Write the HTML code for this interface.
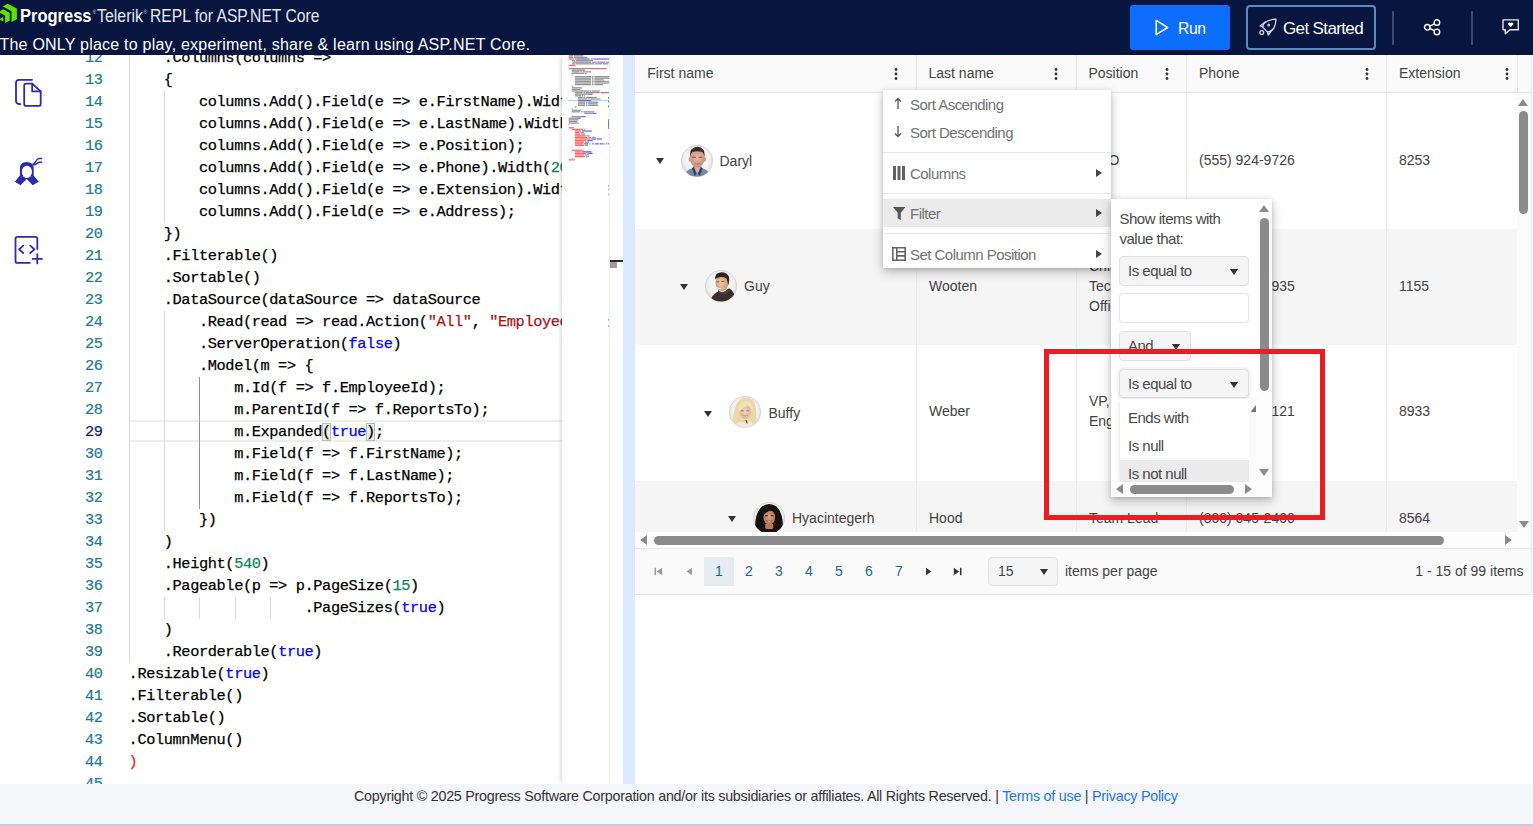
<!DOCTYPE html>
<html lang="en">
<head>
<meta charset="utf-8">
<title>Telerik REPL for ASP.NET Core</title>
<style>
*{box-sizing:border-box;margin:0;padding:0}
html,body{width:1533px;height:826px;overflow:hidden;background:#fff;font-family:"Liberation Sans",sans-serif}
.abs{position:absolute}
#hdr{position:absolute;left:0;top:0;width:1533px;height:55px;background:#07153f;color:#fff;z-index:50}
#hdr .bt{position:absolute;top:3.900px;font-size:18.700px;line-height:24px;white-space:nowrap;color:#fff;transform-origin:0 50%}
#hdr .bt.lt{color:#e4e8f2}
#hdr .bt.rg{font-size:5px;top:-0.500px;color:#cfd5e6}
#hdr .tag{position:absolute;left:-0.5px;top:34.6px;font-size:16px;line-height:20px;white-space:nowrap;letter-spacing:0.225px;color:#fff}
.btn{position:absolute;top:5px;height:45px;border-radius:3px;font-size:17px;color:#fff;line-height:45px;white-space:nowrap}
#run{left:1130px;width:100px;background:#0d6efd}
#gs{left:1246px;width:130px;border:2px solid #5a8abf;border-radius:4px}
.vsep{position:absolute;top:10.500px;width:1.500px;height:34.500px;background:#3b486f}
/* sidebar + editor */
#side{position:absolute;left:0;top:55px;width:60px;height:729px;background:#fff}
#ed{position:absolute;left:60px;top:55px;width:549px;height:729px;background:#fff;overflow:hidden}
#edin{position:absolute;left:-60px;top:-55px;width:623px;height:900px}
.ln{position:absolute;left:60px;width:42.6px;text-align:right;font:15.3px/22px "Liberation Mono",monospace;letter-spacing:-0.384px;color:#237893;height:22px;-webkit-text-stroke:0.2px;margin-top:-0.100px}
.ln.cur{color:#0b216f}
.cl{position:absolute;left:128.6px;height:22px;font:15.3px/22px "Liberation Mono",monospace;letter-spacing:-0.384px;color:#000;white-space:pre;-webkit-text-stroke:0.25px;margin-top:-0.100px}
.k{color:#0000ff}.s{color:#a31515}.n{color:#098658}.err{color:#e8252b}
.br{outline:1px solid #b9b9b9;background:#e9f0e4;outline-offset:-1px}
.ig{position:absolute;width:1px;background:#dadada}
.ig.act{background:#939393}
#curline{position:absolute;left:130px;top:420px;width:432px;height:22px;border-top:2px solid #eee;border-bottom:2px solid #eee}
#mm{position:absolute;left:562px;top:55px;width:48px;height:729px;background:#fff;box-shadow:-3px 0 4px -2px rgba(0,0,0,.18)}
#ovr{position:absolute;left:609px;top:55px;width:13px;height:729px;background:#fff;border-left:1px solid #eee}
#split{position:absolute;left:623px;top:55px;width:12px;height:729px;background:#dbe9fb}
/* grid */
#grid{position:absolute;left:635px;top:55px;width:898px;height:540px;font-size:14px;color:#424242;overflow:hidden}
#gh{position:absolute;left:0;top:0;width:898px;height:38px;background:#fafafa;border-bottom:1px solid #e6e6e6}
.th{position:absolute;top:0;height:37px;line-height:37.6px;padding-left:11.5px;border-left:1px solid #e6e6e6;white-space:nowrap}
.dots{position:absolute;top:12.5px;width:4px;height:12px}
.row{position:absolute;left:0;width:882px}
.row.alt{background:#f5f5f5}
.cell{position:absolute;top:0;height:100%;border-left:1px solid #ebebeb}
.ct{position:absolute;left:12px;white-space:nowrap;line-height:20px}
.nm{position:absolute;line-height:20px;white-space:nowrap}
.av{position:absolute;width:32px;height:32px}
.exp{position:absolute;width:0;height:0;border-left:4.5px solid transparent;border-right:4.5px solid transparent;border-top:6px solid #333}
#pager{position:absolute;left:0;top:493px;width:898px;height:47px;background:#fafafa;border-top:1px solid #e6e6e6;border-bottom:1px solid #e6e6e6}
.pn{position:absolute;top:7.500px;margin-left:1px;width:30px;height:29px;line-height:29px;text-align:center;color:#1d6590;font-size:14px}
/* popups */
.pop{position:absolute;background:#fff;box-shadow:0 4px 10px rgba(0,0,0,.25),0 1px 4px rgba(0,0,0,.13)}
.mi{position:absolute;left:0;width:228px;height:28px;line-height:29.4px;font-size:15px;color:#727272;white-space:nowrap;letter-spacing:-0.53px}
.mi span{position:absolute;left:27px}
.msep{position:absolute;left:0;width:228px;height:1px;background:#e9e9e9}
.arr{position:absolute;width:0;height:0;border-top:4px solid transparent;border-bottom:4px solid transparent;border-left:6px solid #444}
.dd{position:absolute;background:#f5f5f5;border:1px solid #e2e2e2;border-radius:4px;font-size:15px;color:#484848;letter-spacing:-0.5px;white-space:nowrap;overflow:hidden}
.dd span{position:absolute;left:8px}
.dn{position:absolute;width:0;height:0;border-left:4.5px solid transparent;border-right:4.5px solid transparent;border-top:6px solid #333}
#foot{position:absolute;left:0;top:784px;width:1533px;height:42px;background:#f5f6f9;border-bottom:2px solid #c3cdda;font-size:14.3px;color:#333;z-index:40}
#foot div{position:absolute;left:354px;top:3.200px;line-height:18px;white-space:nowrap;letter-spacing:-0.245px}
#foot a{color:#2376ee;text-decoration:none}
#red{position:absolute;left:1044px;top:349px;width:281px;height:171px;border:5px solid #ec1c24;z-index:30}
</style>
</head>
<body>
<svg width="0" height="0" style="position:absolute"><defs>
<radialGradient id="abg" cx="50%" cy="45%" r="55%"><stop offset="0" stop-color="#ffffff"/><stop offset="0.7" stop-color="#f3f3f3"/><stop offset="1" stop-color="#dcdcdc"/></radialGradient>
<clipPath id="acl"><circle cx="16" cy="16" r="15.6"/></clipPath>
<radialGradient id="sk1" cx="50%" cy="45%" r="60%"><stop offset="0" stop-color="#e6b8a2"/><stop offset="1" stop-color="#c48f79"/></radialGradient>
<radialGradient id="sk2" cx="45%" cy="50%" r="60%"><stop offset="0" stop-color="#f0c9a4"/><stop offset="1" stop-color="#c99570"/></radialGradient>
<radialGradient id="sk3" cx="50%" cy="50%" r="60%"><stop offset="0" stop-color="#f3d2bb"/><stop offset="1" stop-color="#ddb094"/></radialGradient>
<radialGradient id="sk4" cx="50%" cy="50%" r="60%"><stop offset="0" stop-color="#d9a27e"/><stop offset="1" stop-color="#a8704f"/></radialGradient>
</defs></svg>
<!-- HEADER -->
<div id="hdr">
  <svg class="abs" style="left:0;top:0" width="20" height="26" viewBox="0 0 20 26">
    <g fill="#5ce500">
      <path d="M7.600 3.700 L16.900 8.600 V19.200 L11.500 22.100 V11.300 L2.900 6.500 Z"/>
      <path d="M3.300 9.200 L9.800 12.900 V20.400 L5.100 23.100 V15.700 L-1.500 12 Z"/>
      <path d="M3.300 16.800 V21.700 L-1 19.200 Z"/>
    </g>
  </svg>
  <div class="bt" style="left:20px;font-weight:bold;font-size:19px;transform:scaleX(0.868)">Progress</div>
  <div class="bt rg" style="left:92.600px">®</div>
  <div class="bt lt" style="left:96.600px;transform:scaleX(0.850)">Telerik</div>
  <div class="bt rg" style="left:143.600px">®</div>
  <div class="bt lt" style="left:150px;transform:scaleX(0.838)">REPL for ASP.NET Core</div>
  <div class="tag">The ONLY place to play, experiment, share &amp; learn using ASP.NET Core.</div>

  <div class="btn" id="run">
    <svg class="abs" style="left:25px;top:14px" width="14" height="17" viewBox="0 0 14 17"><path d="M1.2 1.4 L12.6 8.5 L1.2 15.6 Z" fill="none" stroke="#fff" stroke-width="1.5" stroke-linejoin="round"/></svg>
    <span class="abs" style="left:47.700px;top:0.700px;letter-spacing:-0.400px;transform:scaleX(0.920);transform-origin:0 50%">Run</span>
  </div>
  <div class="btn" id="gs">
    <svg class="abs" style="left:9px;top:10px" width="21" height="20" viewBox="0 0 21 20" fill="none" stroke="#d8dce6" stroke-width="1.250" stroke-linecap="round" stroke-linejoin="round">
      <path d="M19 2.200 C15 2.400 10 3.800 7.200 6.200 C5.700 8 5.800 10 6.300 10.900 L10.400 14.900 C12.500 15 15 13.500 16.800 11.400 C18.300 8.500 18.900 5 19 2.200 Z"/>
      <circle cx="11.700" cy="7.900" r="1.500" fill="#b9bfce" stroke="none"/>
      <path d="M8.600 4.800 L2.900 9 L6.200 9.800"/>
      <path d="M15.700 12.200 L11.300 18 L10.400 14.900"/>
      <circle cx="4.800" cy="15.500" r="1.900"/>
    </svg>
    <span class="abs" style="left:35px;top:-1.300px;letter-spacing:-0.630px">Get Started</span>
  </div>
  <div class="vsep" style="left:1392.200px"></div>
  <div class="vsep" style="left:1471.200px"></div>
  <svg class="abs" style="left:1423px;top:18px" width="19" height="18" viewBox="0 0 19 18" fill="none" stroke="#fff" stroke-width="1.4">
    <circle cx="4.300" cy="9.300" r="2.800"/><circle cx="13.900" cy="4.600" r="2.800"/><circle cx="13.900" cy="13.900" r="2.800"/>
    <path d="M6.800 8.100 L11.400 5.800 M6.800 10.500 L11.400 12.700"/>
  </svg>
  <svg class="abs" style="left:1501px;top:19px" width="19" height="17" viewBox="0 0 19 17">
    <path d="M2 0.900 H17.300 V10.800 H9 L4.300 14.800 V10.800 H2 Z" fill="none" stroke="#e6e9f0" stroke-width="1.400" stroke-linejoin="round"/>
    <path d="M9.700 8.200 L7.200 5.600 A1.400 1.400 0 0 1 9.700 4.200 A1.400 1.400 0 0 1 12.200 5.600 Z" fill="#fff"/>
  </svg>
</div>

<!-- SIDEBAR -->
<div id="side">
  <svg class="abs" style="left:14px;top:23px" width="30" height="31" viewBox="0 0 30 31" fill="none" stroke="#2b2bab" stroke-width="1.800" stroke-linejoin="round" stroke-linecap="round">
    <path d="M18 1.800 H5 Q2 1.800 2 4.800 V22.800 Q2 26.200 6.300 26.200"/>
    <path d="M12.200 5.600 H18.200 L26.700 13.400 V25.900 Q26.700 27.900 24.700 27.900 H12.200 Q10.200 27.900 10.200 25.900 V7.600 Q10.200 5.600 12.200 5.600 Z"/>
    <path d="M18.200 5.600 V13.400 H26.700"/>
  </svg>
  <svg class="abs" style="left:12px;top:100px" width="34" height="34" viewBox="0 0 34 34">
    <path d="M7.900 21.500 V13.500 Q7.900 6.900 14.800 6.900 Q21.700 6.900 21.700 13.500 V21.500 Z" fill="#2b2bab"/>
    <path d="M8 20.500 L2.800 26.700 L8.600 30.300 L14.600 24 L20.700 30.300 L26.700 26.700 L21.600 20.500 L14.600 23 Z" fill="#2b2bab"/>
    <ellipse cx="14.900" cy="16.750" rx="5.100" ry="6.050" fill="#fff"/>
    <path d="M21 9.200 C23.500 8 24.500 3.500 27 3.500 H29.700 M21.500 9.800 C24.500 10 25.500 7.300 27.500 7.300 H29.700" fill="none" stroke="#2b2bab" stroke-width="1.400" stroke-linecap="round"/>
  </svg>
  <svg class="abs" style="left:12px;top:178px" width="34" height="34" viewBox="0 0 34 34" fill="none" stroke="#2b2bab" stroke-width="1.800" stroke-linecap="round" stroke-linejoin="round">
    <path d="M25.300 16.100 V5.800 Q25.300 3.800 23.300 3.800 H5.500 Q3.500 3.800 3.500 5.800 V27.900 Q3.500 29.900 5.500 29.900 H17.800"/>
    <path d="M11.200 12.700 L7.100 16.400 L11.200 20 M18.300 12.700 L22.400 16.400 L18.300 20"/>
    <path d="M25.300 21.200 V30.400 M20.700 25.900 H29.900"/>
  </svg>
</div>

<!-- EDITOR -->
<div id="ed"><div id="edin">
<div id="curline"></div>
<div class="ln" style="top:47px">12</div>
<div class="cl" style="top:47px">    .Columns(columns =&gt;</div>
<div class="ln" style="top:69px">13</div>
<div class="cl" style="top:69px">    {</div>
<div class="ln" style="top:91px">14</div>
<div class="cl" style="top:91px">        columns.Add().Field(e =&gt; e.FirstName).Width(200);</div>
<div class="ln" style="top:113px">15</div>
<div class="cl" style="top:113px">        columns.Add().Field(e =&gt; e.LastName).Width(160);</div>
<div class="ln" style="top:135px">16</div>
<div class="cl" style="top:135px">        columns.Add().Field(e =&gt; e.Position);</div>
<div class="ln" style="top:157px">17</div>
<div class="cl" style="top:157px">        columns.Add().Field(e =&gt; e.Phone).Width(<span class="n">200</span>);</div>
<div class="ln" style="top:179px">18</div>
<div class="cl" style="top:179px">        columns.Add().Field(e =&gt; e.Extension).Width(140);</div>
<div class="ln" style="top:201px">19</div>
<div class="cl" style="top:201px">        columns.Add().Field(e =&gt; e.Address);</div>
<div class="ln" style="top:223px">20</div>
<div class="cl" style="top:223px">    })</div>
<div class="ln" style="top:245px">21</div>
<div class="cl" style="top:245px">    .Filterable()</div>
<div class="ln" style="top:267px">22</div>
<div class="cl" style="top:267px">    .Sortable()</div>
<div class="ln" style="top:289px">23</div>
<div class="cl" style="top:289px">    .DataSource(dataSource =&gt; dataSource</div>
<div class="ln" style="top:311px">24</div>
<div class="cl" style="top:311px">        .Read(read =&gt; read.Action(<span class="s">&quot;All&quot;</span>, <span class="s">&quot;EmployeeDirectory&quot;</span>))</div>
<div class="ln" style="top:333px">25</div>
<div class="cl" style="top:333px">        .ServerOperation(<span class="k">false</span>)</div>
<div class="ln" style="top:355px">26</div>
<div class="cl" style="top:355px">        .Model(m =&gt; {</div>
<div class="ln" style="top:377px">27</div>
<div class="cl" style="top:377px">            m.Id(f =&gt; f.EmployeeId);</div>
<div class="ln" style="top:399px">28</div>
<div class="cl" style="top:399px">            m.ParentId(f =&gt; f.ReportsTo);</div>
<div class="ln cur" style="top:421px">29</div>
<div class="cl" style="top:421px">            m.Expanded<span class="br">(</span><span class="k">true</span><span class="br">)</span>;</div>
<div class="ln" style="top:443px">30</div>
<div class="cl" style="top:443px">            m.Field(f =&gt; f.FirstName);</div>
<div class="ln" style="top:465px">31</div>
<div class="cl" style="top:465px">            m.Field(f =&gt; f.LastName);</div>
<div class="ln" style="top:487px">32</div>
<div class="cl" style="top:487px">            m.Field(f =&gt; f.ReportsTo);</div>
<div class="ln" style="top:509px">33</div>
<div class="cl" style="top:509px">        })</div>
<div class="ln" style="top:531px">34</div>
<div class="cl" style="top:531px">    )</div>
<div class="ln" style="top:553px">35</div>
<div class="cl" style="top:553px">    .Height(<span class="n">540</span>)</div>
<div class="ln" style="top:575px">36</div>
<div class="cl" style="top:575px">    .Pageable(p =&gt; p.PageSize(<span class="n">15</span>)</div>
<div class="ln" style="top:597px">37</div>
<div class="cl" style="top:597px">                    .PageSizes(<span class="k">true</span>)</div>
<div class="ln" style="top:619px">38</div>
<div class="cl" style="top:619px">    )</div>
<div class="ln" style="top:641px">39</div>
<div class="cl" style="top:641px">    .Reorderable(<span class="k">true</span>)</div>
<div class="ln" style="top:663px">40</div>
<div class="cl" style="top:663px">.Resizable(<span class="k">true</span>)</div>
<div class="ln" style="top:685px">41</div>
<div class="cl" style="top:685px">.Filterable()</div>
<div class="ln" style="top:707px">42</div>
<div class="cl" style="top:707px">.Sortable()</div>
<div class="ln" style="top:729px">43</div>
<div class="cl" style="top:729px">.ColumnMenu()</div>
<div class="ln" style="top:751px">44</div>
<div class="cl" style="top:751px"><span class="err">)</span></div>
<div class="ln" style="top:773px">45</div>
<div class="cl" style="top:773px"></div>
<div class="ig" style="left:129.0px;top:47px;height:616px"></div>
<div class="ig" style="left:164.2px;top:91px;height:132px"></div>
<div class="ig" style="left:164.2px;top:311px;height:220px"></div>
<div class="ig act" style="left:199.4px;top:377px;height:132px"></div>
<div class="ig" style="left:164.2px;top:597px;height:22px"></div>
<div class="ig" style="left:199.4px;top:597px;height:22px"></div>
<div class="ig" style="left:234.6px;top:597px;height:22px"></div>
<div class="ig" style="left:269.8px;top:597px;height:22px"></div>
</div></div>
<div id="mm"><svg class="abs" style="left:0;top:0" width="48" height="290" viewBox="0 0 48 290"><rect x="6" y="45.20" width="41" height="0.9" fill="#9cc7f5" opacity=".9"/><rect x="6.60" y="0.20" width="0.78" height="1.25" fill="#ff0000" opacity="0.60"/><rect x="7.38" y="0.20" width="3.90" height="1.25" fill="#000" opacity="0.42"/><rect x="12.06" y="0.20" width="9.36" height="1.25" fill="#000" opacity="0.42"/><rect x="6.60" y="1.80" width="0.78" height="1.25" fill="#ff0000" opacity="0.60"/><rect x="7.38" y="1.80" width="3.90" height="1.25" fill="#000" opacity="0.42"/><rect x="12.06" y="1.80" width="13.26" height="1.25" fill="#000" opacity="0.42"/><rect x="6.60" y="3.40" width="5.46" height="1.25" fill="#ff0000" opacity="0.60"/><rect x="12.84" y="3.40" width="2.34" height="1.25" fill="#ff0000" opacity="0.60"/><rect x="15.18" y="3.40" width="12.48" height="1.25" fill="#0000ff" opacity="0.60"/><rect x="28.44" y="3.40" width="3.90" height="1.25" fill="#ff0000" opacity="0.60"/><rect x="32.34" y="3.40" width="14.66" height="1.25" fill="#0000ff" opacity="0.60"/><rect x="9.72" y="5.00" width="3.12" height="1.25" fill="#000" opacity="0.42"/><rect x="13.62" y="5.00" width="17.16" height="1.25" fill="#000" opacity="0.42"/><rect x="10.50" y="6.60" width="18.72" height="1.25" fill="#000" opacity="0.42"/><rect x="30.00" y="6.60" width="4.68" height="1.25" fill="#000" opacity="0.42"/><rect x="35.46" y="6.60" width="7.80" height="1.25" fill="#000" opacity="0.42"/><rect x="44.04" y="6.60" width="2.96" height="1.25" fill="#000" opacity="0.42"/><rect x="9.72" y="8.20" width="3.12" height="1.25" fill="#000" opacity="0.42"/><rect x="13.62" y="8.20" width="18.72" height="1.25" fill="#000" opacity="0.42"/><rect x="33.12" y="8.20" width="7.02" height="1.25" fill="#000" opacity="0.42"/><rect x="40.92" y="8.20" width="5.46" height="1.25" fill="#000" opacity="0.42"/><rect x="6.60" y="9.80" width="7.02" height="1.25" fill="#ff0000" opacity="0.60"/><rect x="6.60" y="13.00" width="1.56" height="1.25" fill="#ff0000" opacity="0.60"/><rect x="8.16" y="13.00" width="17.16" height="1.25" fill="#000" opacity="0.42"/><rect x="25.32" y="13.00" width="17.16" height="1.25" fill="#a31515" opacity="0.60"/><rect x="42.48" y="13.00" width="2.34" height="1.25" fill="#000" opacity="0.42"/><rect x="9.72" y="14.60" width="4.68" height="1.25" fill="#000" opacity="0.42"/><rect x="14.40" y="14.60" width="7.80" height="1.25" fill="#a31515" opacity="0.60"/><rect x="22.20" y="14.60" width="0.78" height="1.25" fill="#000" opacity="0.42"/><rect x="9.72" y="16.20" width="7.80" height="1.25" fill="#000" opacity="0.42"/><rect x="18.30" y="16.20" width="1.56" height="1.25" fill="#000" opacity="0.42"/><rect x="20.64" y="16.20" width="8.58" height="1.25" fill="#000" opacity="0.42"/><rect x="9.72" y="17.80" width="12.48" height="1.25" fill="#000" opacity="0.42"/><rect x="22.98" y="17.80" width="1.56" height="1.25" fill="#000" opacity="0.42"/><rect x="9.72" y="19.40" width="0.78" height="1.25" fill="#000" opacity="0.42"/><rect x="12.84" y="21.00" width="16.38" height="1.25" fill="#000" opacity="0.42"/><rect x="30.00" y="21.00" width="1.56" height="1.25" fill="#000" opacity="0.42"/><rect x="32.34" y="21.00" width="14.66" height="1.25" fill="#000" opacity="0.42"/><rect x="12.84" y="22.60" width="16.38" height="1.25" fill="#000" opacity="0.42"/><rect x="30.00" y="22.60" width="1.56" height="1.25" fill="#000" opacity="0.42"/><rect x="32.34" y="22.60" width="14.66" height="1.25" fill="#000" opacity="0.42"/><rect x="12.84" y="24.20" width="16.38" height="1.25" fill="#000" opacity="0.42"/><rect x="30.00" y="24.20" width="1.56" height="1.25" fill="#000" opacity="0.42"/><rect x="32.34" y="24.20" width="9.36" height="1.25" fill="#000" opacity="0.42"/><rect x="12.84" y="25.80" width="16.38" height="1.25" fill="#000" opacity="0.42"/><rect x="30.00" y="25.80" width="1.56" height="1.25" fill="#000" opacity="0.42"/><rect x="32.34" y="25.80" width="11.70" height="1.25" fill="#000" opacity="0.42"/><rect x="44.04" y="25.80" width="2.34" height="1.25" fill="#098658" opacity="0.60"/><rect x="46.38" y="25.80" width="0.62" height="1.25" fill="#000" opacity="0.42"/><rect x="12.84" y="27.40" width="16.38" height="1.25" fill="#000" opacity="0.42"/><rect x="30.00" y="27.40" width="1.56" height="1.25" fill="#000" opacity="0.42"/><rect x="32.34" y="27.40" width="14.66" height="1.25" fill="#000" opacity="0.42"/><rect x="12.84" y="29.00" width="16.38" height="1.25" fill="#000" opacity="0.42"/><rect x="30.00" y="29.00" width="1.56" height="1.25" fill="#000" opacity="0.42"/><rect x="32.34" y="29.00" width="8.58" height="1.25" fill="#000" opacity="0.42"/><rect x="9.72" y="30.60" width="1.56" height="1.25" fill="#000" opacity="0.42"/><rect x="9.72" y="32.20" width="10.14" height="1.25" fill="#000" opacity="0.42"/><rect x="9.72" y="33.80" width="8.58" height="1.25" fill="#000" opacity="0.42"/><rect x="9.72" y="35.40" width="17.16" height="1.25" fill="#000" opacity="0.42"/><rect x="27.66" y="35.40" width="1.56" height="1.25" fill="#000" opacity="0.42"/><rect x="30.00" y="35.40" width="7.80" height="1.25" fill="#000" opacity="0.42"/><rect x="12.84" y="37.00" width="7.80" height="1.25" fill="#000" opacity="0.42"/><rect x="21.42" y="37.00" width="1.56" height="1.25" fill="#000" opacity="0.42"/><rect x="23.76" y="37.00" width="9.36" height="1.25" fill="#000" opacity="0.42"/><rect x="33.12" y="37.00" width="3.90" height="1.25" fill="#a31515" opacity="0.60"/><rect x="37.02" y="37.00" width="0.78" height="1.25" fill="#000" opacity="0.42"/><rect x="38.58" y="37.00" width="8.42" height="1.25" fill="#a31515" opacity="0.60"/><rect x="12.84" y="38.60" width="13.26" height="1.25" fill="#000" opacity="0.42"/><rect x="26.10" y="38.60" width="3.90" height="1.25" fill="#0000ff" opacity="0.60"/><rect x="30.00" y="38.60" width="0.78" height="1.25" fill="#000" opacity="0.42"/><rect x="12.84" y="40.20" width="6.24" height="1.25" fill="#000" opacity="0.42"/><rect x="19.86" y="40.20" width="1.56" height="1.25" fill="#000" opacity="0.42"/><rect x="22.20" y="40.20" width="0.78" height="1.25" fill="#000" opacity="0.42"/><rect x="15.96" y="41.80" width="4.68" height="1.25" fill="#000" opacity="0.42"/><rect x="21.42" y="41.80" width="1.56" height="1.25" fill="#000" opacity="0.42"/><rect x="23.76" y="41.80" width="10.92" height="1.25" fill="#000" opacity="0.42"/><rect x="15.96" y="43.40" width="9.36" height="1.25" fill="#000" opacity="0.42"/><rect x="26.10" y="43.40" width="1.56" height="1.25" fill="#000" opacity="0.42"/><rect x="28.44" y="43.40" width="10.14" height="1.25" fill="#000" opacity="0.42"/><rect x="15.96" y="45.00" width="7.80" height="1.25" fill="#000" opacity="0.42"/><rect x="23.76" y="45.00" width="0.78" height="1.25" fill="#000" opacity="0.42"/><rect x="24.54" y="45.00" width="3.12" height="1.25" fill="#0000ff" opacity="0.60"/><rect x="27.66" y="45.00" width="0.78" height="1.25" fill="#000" opacity="0.42"/><rect x="28.44" y="45.00" width="0.78" height="1.25" fill="#000" opacity="0.42"/><rect x="15.96" y="46.60" width="7.02" height="1.25" fill="#000" opacity="0.42"/><rect x="23.76" y="46.60" width="1.56" height="1.25" fill="#000" opacity="0.42"/><rect x="26.10" y="46.60" width="10.14" height="1.25" fill="#000" opacity="0.42"/><rect x="15.96" y="48.20" width="7.02" height="1.25" fill="#000" opacity="0.42"/><rect x="23.76" y="48.20" width="1.56" height="1.25" fill="#000" opacity="0.42"/><rect x="26.10" y="48.20" width="9.36" height="1.25" fill="#000" opacity="0.42"/><rect x="15.96" y="49.80" width="7.02" height="1.25" fill="#000" opacity="0.42"/><rect x="23.76" y="49.80" width="1.56" height="1.25" fill="#000" opacity="0.42"/><rect x="26.10" y="49.80" width="10.14" height="1.25" fill="#000" opacity="0.42"/><rect x="12.84" y="51.40" width="1.56" height="1.25" fill="#000" opacity="0.42"/><rect x="9.72" y="53.00" width="0.78" height="1.25" fill="#000" opacity="0.42"/><rect x="9.72" y="54.60" width="6.24" height="1.25" fill="#000" opacity="0.42"/><rect x="15.96" y="54.60" width="2.34" height="1.25" fill="#098658" opacity="0.60"/><rect x="18.30" y="54.60" width="0.78" height="1.25" fill="#000" opacity="0.42"/><rect x="9.72" y="56.20" width="8.58" height="1.25" fill="#000" opacity="0.42"/><rect x="19.08" y="56.20" width="1.56" height="1.25" fill="#000" opacity="0.42"/><rect x="21.42" y="56.20" width="8.58" height="1.25" fill="#000" opacity="0.42"/><rect x="30.00" y="56.20" width="1.56" height="1.25" fill="#098658" opacity="0.60"/><rect x="31.56" y="56.20" width="0.78" height="1.25" fill="#000" opacity="0.42"/><rect x="22.20" y="57.80" width="8.58" height="1.25" fill="#000" opacity="0.42"/><rect x="30.78" y="57.80" width="3.12" height="1.25" fill="#0000ff" opacity="0.60"/><rect x="33.90" y="57.80" width="0.78" height="1.25" fill="#000" opacity="0.42"/><rect x="9.72" y="59.40" width="0.78" height="1.25" fill="#000" opacity="0.42"/><rect x="9.72" y="61.00" width="10.14" height="1.25" fill="#000" opacity="0.42"/><rect x="19.86" y="61.00" width="3.12" height="1.25" fill="#0000ff" opacity="0.60"/><rect x="22.98" y="61.00" width="0.78" height="1.25" fill="#000" opacity="0.42"/><rect x="6.60" y="62.60" width="8.58" height="1.25" fill="#000" opacity="0.42"/><rect x="15.18" y="62.60" width="3.12" height="1.25" fill="#0000ff" opacity="0.60"/><rect x="18.30" y="62.60" width="0.78" height="1.25" fill="#000" opacity="0.42"/><rect x="6.60" y="64.20" width="10.14" height="1.25" fill="#000" opacity="0.42"/><rect x="6.60" y="65.80" width="8.58" height="1.25" fill="#000" opacity="0.42"/><rect x="6.60" y="67.40" width="10.14" height="1.25" fill="#000" opacity="0.42"/><rect x="6.60" y="69.00" width="0.78" height="1.25" fill="#ff0000" opacity="0.60"/><rect x="6.60" y="72.20" width="5.46" height="1.25" fill="#ff0000" opacity="0.60"/><rect x="9.72" y="73.80" width="11.70" height="1.25" fill="#ff0000" opacity="0.60"/><rect x="22.20" y="73.80" width="0.78" height="1.25" fill="#ff0000" opacity="0.60"/><rect x="12.84" y="75.40" width="6.24" height="1.25" fill="#ff0000" opacity="0.60"/><rect x="19.86" y="75.40" width="9.36" height="1.25" fill="#0000ff" opacity="0.60"/><rect x="29.22" y="75.40" width="0.78" height="1.25" fill="#ff0000" opacity="0.60"/><rect x="12.84" y="77.00" width="4.68" height="1.25" fill="#ff0000" opacity="0.60"/><rect x="18.30" y="77.00" width="3.12" height="1.25" fill="#098658" opacity="0.60"/><rect x="21.42" y="77.00" width="0.78" height="1.25" fill="#ff0000" opacity="0.60"/><rect x="12.84" y="78.60" width="5.46" height="1.25" fill="#ff0000" opacity="0.60"/><rect x="19.08" y="78.60" width="3.12" height="1.25" fill="#098658" opacity="0.60"/><rect x="22.20" y="78.60" width="0.78" height="1.25" fill="#ff0000" opacity="0.60"/><rect x="12.84" y="80.20" width="10.92" height="1.25" fill="#ff0000" opacity="0.60"/><rect x="24.54" y="80.20" width="2.34" height="1.25" fill="#098658" opacity="0.60"/><rect x="26.88" y="80.20" width="0.78" height="1.25" fill="#ff0000" opacity="0.60"/><rect x="12.84" y="81.80" width="12.48" height="1.25" fill="#ff0000" opacity="0.60"/><rect x="26.10" y="81.80" width="3.12" height="1.25" fill="#098658" opacity="0.60"/><rect x="30.00" y="81.80" width="3.12" height="1.25" fill="#098658" opacity="0.60"/><rect x="33.12" y="81.80" width="0.78" height="1.25" fill="#ff0000" opacity="0.60"/><rect x="12.84" y="83.40" width="15.60" height="1.25" fill="#ff0000" opacity="0.60"/><rect x="29.22" y="83.40" width="4.68" height="1.25" fill="#0000ff" opacity="0.60"/><rect x="34.68" y="83.40" width="4.68" height="1.25" fill="#0000ff" opacity="0.60"/><rect x="39.36" y="83.40" width="0.78" height="1.25" fill="#ff0000" opacity="0.60"/><rect x="12.84" y="85.00" width="11.70" height="1.25" fill="#ff0000" opacity="0.60"/><rect x="25.32" y="85.00" width="4.68" height="1.25" fill="#0000ff" opacity="0.60"/><rect x="30.00" y="85.00" width="0.78" height="1.25" fill="#ff0000" opacity="0.60"/><rect x="12.84" y="86.60" width="9.36" height="1.25" fill="#ff0000" opacity="0.60"/><rect x="22.98" y="86.60" width="3.12" height="1.25" fill="#098658" opacity="0.60"/><rect x="26.10" y="86.60" width="0.78" height="1.25" fill="#ff0000" opacity="0.60"/><rect x="12.84" y="88.20" width="8.58" height="1.25" fill="#ff0000" opacity="0.60"/><rect x="22.20" y="88.20" width="3.90" height="1.25" fill="#0000ff" opacity="0.60"/><rect x="26.88" y="88.20" width="0.78" height="1.25" fill="#098658" opacity="0.60"/><rect x="28.44" y="88.20" width="0.78" height="1.25" fill="#098658" opacity="0.60"/><rect x="30.00" y="88.20" width="2.34" height="1.25" fill="#098658" opacity="0.60"/><rect x="33.12" y="88.20" width="3.90" height="1.25" fill="#0000ff" opacity="0.60"/><rect x="37.80" y="88.20" width="3.90" height="1.25" fill="#0000ff" opacity="0.60"/><rect x="42.48" y="88.20" width="0.78" height="1.25" fill="#0000ff" opacity="0.60"/><rect x="44.04" y="88.20" width="0.78" height="1.25" fill="#0000ff" opacity="0.60"/><rect x="45.60" y="88.20" width="1.40" height="1.25" fill="#0000ff" opacity="0.60"/><rect x="12.84" y="89.80" width="9.36" height="1.25" fill="#ff0000" opacity="0.60"/><rect x="22.98" y="89.80" width="2.34" height="1.25" fill="#098658" opacity="0.60"/><rect x="25.32" y="89.80" width="0.78" height="1.25" fill="#ff0000" opacity="0.60"/><rect x="9.72" y="91.40" width="0.78" height="1.25" fill="#000" opacity="0.42"/><rect x="9.72" y="94.60" width="10.92" height="1.25" fill="#ff0000" opacity="0.60"/><rect x="21.42" y="94.60" width="0.78" height="1.25" fill="#ff0000" opacity="0.60"/><rect x="12.84" y="96.20" width="6.24" height="1.25" fill="#ff0000" opacity="0.60"/><rect x="19.86" y="96.20" width="9.36" height="1.25" fill="#0000ff" opacity="0.60"/><rect x="29.22" y="96.20" width="0.78" height="1.25" fill="#ff0000" opacity="0.60"/><rect x="12.84" y="97.80" width="11.70" height="1.25" fill="#ff0000" opacity="0.60"/><rect x="25.32" y="97.80" width="4.68" height="1.25" fill="#0000ff" opacity="0.60"/><rect x="30.00" y="97.80" width="0.78" height="1.25" fill="#ff0000" opacity="0.60"/><rect x="12.84" y="99.40" width="9.36" height="1.25" fill="#ff0000" opacity="0.60"/><rect x="22.98" y="99.40" width="3.12" height="1.25" fill="#098658" opacity="0.60"/><rect x="26.10" y="99.40" width="0.78" height="1.25" fill="#ff0000" opacity="0.60"/><rect x="12.84" y="101.00" width="10.14" height="1.25" fill="#ff0000" opacity="0.60"/><rect x="23.76" y="101.00" width="2.34" height="1.25" fill="#098658" opacity="0.60"/><rect x="26.10" y="101.00" width="0.78" height="1.25" fill="#ff0000" opacity="0.60"/><rect x="9.72" y="102.60" width="0.78" height="1.25" fill="#000" opacity="0.42"/><rect x="6.60" y="104.20" width="6.24" height="1.25" fill="#ff0000" opacity="0.60"/><rect x="46" y="42.0" width="2" height="1.7" fill="#2e9c7b"/><rect x="46" y="45.7" width="2" height="1.7" fill="#2e9c7b"/><rect x="46" y="50.5" width="2" height="1.7" fill="#2e9c7b"/><rect x="46.3" y="130" width="1.6" height="1.5" fill="#3fa58a"/><rect x="46.3" y="133.900" width="1.6" height="1.500" fill="#3fa58a"/><rect x="46.300" y="138.600" width="1.600" height="1.500" fill="#3fa58a"/><rect x="46.300" y="264" width="1.600" height="1.600" fill="#c0504d"/><rect x="46.300" y="270.300" width="1.600" height="1.600" fill="#c0504d"/><rect x="46" y="64.2" width="2" height="2" fill="#4a97e6"/><rect x="46" y="66.2" width="2" height="5.7" fill="#a9714f"/><rect x="46" y="71.9" width="2" height="2" fill="#4a97e6"/></svg></div>
<div id="ovr">
  <div class="abs" style="left:0;top:205px;width:13px;height:1.5px;background:#2b2b2b"></div>
  <div class="abs" style="left:0;top:206.5px;width:7px;height:6px;background:#9c9c9c"></div>
</div>
<div id="split"></div>

<div id="grid">
  <div id="gh">
    <div class="th" style="left:0;width:281px;border-left:none;padding-left:12.300px">First name</div>
    <div class="th" style="left:281px;width:160px">Last name</div>
    <div class="th" style="left:441px;width:110px">Position</div>
    <div class="th" style="left:551px;width:200px;padding-left:12px">Phone</div>
    <div class="th" style="left:751px;width:131px;padding-left:12px">Extension</div>
    <div class="th" style="left:882px;width:16px;padding:0"></div>
    <svg class="dots" style="left:258.5px" viewBox="0 0 4 12"><circle cx="2" cy="1.5" r="1.4" fill="#333"/><circle cx="2" cy="6" r="1.4" fill="#333"/><circle cx="2" cy="10.5" r="1.4" fill="#333"/></svg>
    <svg class="dots" style="left:418.5px" viewBox="0 0 4 12"><circle cx="2" cy="1.5" r="1.4" fill="#333"/><circle cx="2" cy="6" r="1.4" fill="#333"/><circle cx="2" cy="10.5" r="1.4" fill="#333"/></svg>
    <svg class="dots" style="left:529.5px" viewBox="0 0 4 12"><circle cx="2" cy="1.5" r="1.4" fill="#333"/><circle cx="2" cy="6" r="1.4" fill="#333"/><circle cx="2" cy="10.5" r="1.4" fill="#333"/></svg>
    <svg class="dots" style="left:729.5px" viewBox="0 0 4 12"><circle cx="2" cy="1.5" r="1.4" fill="#333"/><circle cx="2" cy="6" r="1.4" fill="#333"/><circle cx="2" cy="10.5" r="1.4" fill="#333"/></svg>
    <svg class="dots" style="left:869.5px" viewBox="0 0 4 12"><circle cx="2" cy="1.5" r="1.4" fill="#333"/><circle cx="2" cy="6" r="1.4" fill="#333"/><circle cx="2" cy="10.5" r="1.4" fill="#333"/></svg>
  </div>

  <!-- row 1 -->
  <div class="row" style="top:38px;height:136px">
    <div class="cell" style="left:281px;width:160px"></div>
    <div class="cell" style="left:441px;width:110px"><div class="ct" style="top:56.500px">CEO</div></div>
    <div class="cell" style="left:551px;width:200px"><div class="ct" style="top:56.500px">(555) 924-9726</div></div>
    <div class="cell" style="left:751px;width:131px"><div class="ct" style="top:56.500px">8253</div></div>
    <div class="exp" style="left:20.7px;top:64.7px"></div>
    <svg class="av" style="left:45.5px;top:51.6px" viewBox="0 0 32 32"><circle cx="16" cy="16" r="15.7" fill="url(#abg)" stroke="#d2d2d2" stroke-width="0.8"/><g clip-path="url(#acl)"><path d="M3 32 Q4 25.5 10.5 23.5 L16.3 28 L22 23.5 Q28.500 25.500 29.500 32Z" fill="#7189ab"/><path d="M12.200 22 L16.300 29 L20.600 22 L19.500 19 H13Z" fill="url(#sk1)"/><path d="M10.800 23.300 L13 22 L15.600 28.500 L13.800 31Z M21.800 23.300 L19.700 22 L17 28.500 L18.800 31Z" fill="#35426a"/><ellipse cx="16.300" cy="13.200" rx="7.300" ry="9.300" fill="url(#sk1)"/><ellipse cx="8.800" cy="14.500" rx="1.200" ry="2.200" fill="#cf9a84"/><ellipse cx="23.800" cy="14.500" rx="1.200" ry="2.200" fill="#cf9a84"/><path d="M9 12.500 Q8.200 2 16.300 1.800 Q24.500 2 23.600 12.500 Q23 8 20.500 6.800 Q16.300 5.600 12 6.800 Q9.600 8 9 12.500Z" fill="#3a2c2a"/><path d="M11.300 12.300 h3.600 M17.700 12.300 h3.600" stroke="#5a4038" stroke-width="1.100" opacity=".8"/><path d="M13.300 18.300 Q16.300 20.300 19.300 18.300 Q16.300 19.300 13.300 18.300Z" fill="#b9766e" stroke="#b9766e" stroke-width=".5"/></g></svg>
    <div class="nm" style="left:84.5px;top:57.5px">Daryl</div>
  </div>
  <!-- row 2 -->
  <div class="row alt" style="top:174px;height:116px">
    <div class="cell" style="left:281px;width:160px"><div class="ct" style="top:47px">Wooten</div></div>
    <div class="cell" style="left:441px;width:110px"><div class="ct" style="top:27px">Chief<br>Technical<br>Officer</div></div>
    <div class="cell" style="left:551px;width:200px"><div class="ct" style="top:47px">(555) 763-1935</div></div>
    <div class="cell" style="left:751px;width:131px"><div class="ct" style="top:47px">1155</div></div>
    <div class="exp" style="left:44.7px;top:55px"></div>
    <svg class="av" style="left:69.6px;top:41.2px" viewBox="0 0 32 32"><circle cx="16" cy="16" r="15.7" fill="url(#abg)" stroke="#d2d2d2" stroke-width="0.8"/><g clip-path="url(#acl)"><path d="M5.500 32 Q6 25 13 21.500 L18 22.500 L24.500 18.500 Q27.500 20 29.500 25 L30 32Z" fill="#3b2e2f"/><path d="M13 20 Q17 24.500 22.500 19.500 L24.200 18 Q25.200 20.500 22 23.500 Q17.500 26 13 22Z" fill="#4d3f40"/><ellipse cx="16.800" cy="13" rx="6.300" ry="8.200" fill="url(#sk2)" transform="rotate(-8 16.800 13)"/><path d="M10.300 9.500 Q9.500 3.500 15 2.600 Q19 1.600 22 4 Q25 6.500 24 12 L23.300 15.500 Q22.500 11 21.500 8.500 Q18 6.500 14.500 7.200 Q11.500 7.500 10.300 9.500Z" fill="#30231d"/><path d="M12 17.500 Q14 19.300 16.500 18.300" stroke="#fff" stroke-width="1" fill="none" opacity=".8"/><path d="M11.500 11.800 h2.600 M16.300 11.500 h2.800" stroke="#5a4030" stroke-width="1" opacity=".7"/></g></svg>
    <div class="nm" style="left:109px;top:47px">Guy</div>
  </div>
  <!-- row 3 -->
  <div class="row" style="top:290px;height:136px">
    <div class="cell" style="left:281px;width:160px"><div class="ct" style="top:56px">Weber</div></div>
    <div class="cell" style="left:441px;width:110px"><div class="ct" style="top:46px">VP,<br>Engineering</div></div>
    <div class="cell" style="left:551px;width:200px"><div class="ct" style="top:56px">(555) 579-5121</div></div>
    <div class="cell" style="left:751px;width:131px"><div class="ct" style="top:56px">8933</div></div>
    <div class="exp" style="left:68.7px;top:65.5px"></div>
    <svg class="av" style="left:93.5px;top:51.4px" viewBox="0 0 32 32"><circle cx="16" cy="16" r="15.7" fill="url(#abg)" stroke="#d2d2d2" stroke-width="0.8"/><g clip-path="url(#acl)"><path d="M4 31 Q3.500 14 8 7 Q12 1.200 17.500 1.500 Q23.500 2 26 8 Q28.500 15 26.500 31Z" fill="#ead9a6"/><ellipse cx="16.300" cy="15.500" rx="5.700" ry="7.600" fill="url(#sk3)"/><path d="M9.500 16 Q9 6.500 16 5.200 Q22 4.800 23.500 10.500 Q24 13 23 15.500 Q21.500 10.500 18.500 9.500 Q13.500 11.500 9.500 16Z" fill="#f0e2b6"/><path d="M5 32 Q6 27 11.500 25.500 L16 27 L20.500 25.500 Q25.500 27 27 32Z" fill="#efe9df"/><path d="M12.300 14.700 h2.300 M17.500 14.700 h2.300" stroke="#5b7a9a" stroke-width="1.100" opacity=".9"/><path d="M13.700 19.300 Q16.300 21.200 18.800 19.300 Q16.300 20.200 13.700 19.300Z" fill="#fff" stroke="#d08a86" stroke-width=".6"/><path d="M17 24 l1.200 3.500" stroke="#3a2a25" stroke-width="1"/></g></svg>
    <div class="nm" style="left:133.5px;top:57.5px">Buffy</div>
  </div>
  <!-- row 4 -->
  <div class="row alt" style="top:426px;height:74px">
    <div class="cell" style="left:281px;width:160px"><div class="ct" style="top:26.500px">Hood</div></div>
    <div class="cell" style="left:441px;width:110px"><div class="ct" style="top:26.500px">Team Lead</div></div>
    <div class="cell" style="left:551px;width:200px"><div class="ct" style="top:26.500px">(800) 045-2400</div></div>
    <div class="cell" style="left:751px;width:131px"><div class="ct" style="top:26.500px">8564</div></div>
    <div class="exp" style="left:92.7px;top:35px"></div>
    <svg class="av" style="left:117.5px;top:21.3px" viewBox="0 0 32 32"><circle cx="16" cy="16" r="15.7" fill="url(#abg)" stroke="#d2d2d2" stroke-width="0.8"/><g clip-path="url(#acl)"><path d="M2.500 32 Q0.500 12 9 4.500 Q16 -0.500 23.500 4.500 Q31.500 12 29.500 32Z" fill="#17100f"/><path d="M12.500 22 L12 26.500 Q16.300 28.500 20.500 26.500 L20 22Z" fill="#b97c5a"/><ellipse cx="16.300" cy="15" rx="5.900" ry="7.800" fill="url(#sk4)"/><path d="M10 14 Q10 6.500 16.300 5.800 Q22.500 6.500 22.700 14 Q21 9.500 18 8.800 Q13.500 9 10 14Z" fill="#17100f"/><path d="M13 18.800 Q16.300 21.800 19.600 18.800 Q16.300 19.800 13 18.800Z" fill="#fff" stroke="#8d4a3c" stroke-width=".5"/><path d="M12.200 13.800 h2.500 M17.900 13.800 h2.500" stroke="#2a1a14" stroke-width="1.100"/><path d="M6 32 Q8 27.500 12 26.300 Q16.300 28.800 20.500 26.300 Q24.500 27.500 26.500 32Z" fill="#141014"/></g></svg>
    <div class="nm" style="left:157px;top:27px">Hyacintegerh</div>
  </div>

  <!-- vertical scrollbar -->
  <div class="abs" style="left:881.500px;top:38px;width:16.500px;height:439px;background:#fbfbfb">
    <div class="abs" style="left:1px;top:6px;width:0;height:0;border-left:5.500px solid transparent;border-right:5.500px solid transparent;border-bottom:7px solid #8b8b8b"></div>
    <div class="abs" style="left:2.500px;top:18px;width:9px;height:103px;border-radius:4.500px;background:#8b8b8b"></div>
    <div class="abs" style="left:2px;top:428px;width:0;height:0;border-left:5.500px solid transparent;border-right:5.500px solid transparent;border-top:7px solid #8b8b8b"></div>
  </div>
  <!-- horizontal scrollbar -->
  <div class="abs" style="left:0;top:477px;width:898px;height:17px;background:#fcfcfc">
    <div class="abs" style="left:5px;top:3px;width:0;height:0;border-top:5.500px solid transparent;border-bottom:5.500px solid transparent;border-right:7px solid #8b8b8b"></div>
    <div class="abs" style="left:19px;top:4px;width:790px;height:9px;border-radius:4.500px;background:#8b8b8b"></div>
    <div class="abs" style="left:869.500px;top:3px;width:0;height:0;border-top:5.500px solid transparent;border-bottom:5.500px solid transparent;border-left:7px solid #8b8b8b"></div>
  </div>
  <div class="abs" style="left:896px;top:0;width:1px;height:540px;background:#e9e9e9;z-index:3"></div>
  <div class="abs" style="left:897px;top:0;width:1px;height:540px;background:#fdfdfd;z-index:3"></div>
  <!-- pager -->
  <div id="pager">
    <svg class="abs" style="left:19px;top:17.500px" width="9" height="9" viewBox="0 0 9 9"><rect x="0.500" y="0.800" width="1.600" height="7.400" fill="#9a9a9a"/><path d="M8.200 0.800 V8.200 L2.800 4.500Z" fill="#9a9a9a"/></svg>
    <svg class="abs" style="left:49.500px;top:17.500px" width="9" height="9" viewBox="0 0 9 9"><path d="M7 0.800 V8.200 L1.600 4.500Z" fill="#9a9a9a"/></svg>
    <div class="pn" style="left:68px;background:#e4ebf1">1</div>
    <div class="pn" style="left:98px">2</div>
    <div class="pn" style="left:128px">3</div>
    <div class="pn" style="left:158px">4</div>
    <div class="pn" style="left:188px">5</div>
    <div class="pn" style="left:218px">6</div>
    <div class="pn" style="left:248px">7</div>
    <svg class="abs" style="left:289px;top:17.500px" width="9" height="9" viewBox="0 0 9 9"><path d="M2 0.800 V8.200 L7.400 4.500Z" fill="#333"/></svg>
    <svg class="abs" style="left:318px;top:17.500px" width="9" height="9" viewBox="0 0 9 9"><rect x="6.900" y="0.800" width="1.600" height="7.400" fill="#333"/><path d="M0.800 0.800 V8.200 L6.200 4.500Z" fill="#333"/></svg>
    <div class="dd" style="left:353px;top:7.500px;width:70px;height:29px;font-size:14px;letter-spacing:0"><span style="left:9px;top:5px">15</span><div class="dn" style="left:51px;top:11px"></div></div>
    <div class="abs" style="left:430px;top:11.800px;line-height:20px;white-space:nowrap">items per page</div>
    <div class="abs" style="right:9.500px;top:11.800px;line-height:20px;white-space:nowrap">1 - 15 of 99 items</div>
  </div>
</div>

<!-- column menu -->
<div class="pop" id="cm" style="left:883px;top:90px;width:228px;height:178px;z-index:20">
  <div class="mi" style="top:0">
    <svg class="abs" style="left:11px;top:7px" width="8" height="13" viewBox="0 0 8 13" fill="none" stroke="#555" stroke-width="1.300"><path d="M4 12 V1.500 M1 4.500 L4 1.500 L7 4.500"/></svg>
    <span>Sort Ascending</span></div>
  <div class="mi" style="top:28px">
    <svg class="abs" style="left:11px;top:7px" width="8" height="13" viewBox="0 0 8 13" fill="none" stroke="#555" stroke-width="1.300"><path d="M4 1 V11.500 M1 8.500 L4 11.500 L7 8.500"/></svg>
    <span>Sort Descending</span></div>
  <div class="msep" style="top:62px"></div>
  <div class="mi" style="top:69px">
    <svg class="abs" style="left:9.500px;top:7px" width="12" height="14" viewBox="0 0 12 14"><rect x="0" y="0" width="3" height="14" fill="#626262"/><rect x="4.500" y="0" width="3" height="14" fill="#626262"/><rect x="9" y="0" width="3" height="14" fill="#626262"/></svg>
    <span>Columns</span><div class="arr" style="left:213px;top:10px"></div></div>
  <div class="msep" style="top:103px"></div>
  <div class="mi" style="top:109px;background:#ebebeb">
    <svg class="abs" style="left:9.500px;top:8px" width="12.500" height="13" viewBox="0 0 12.500 13"><path d="M0 0 H12.500 L7.800 5.800 V13 L4.700 11.300 V5.800 Z" fill="#555"/></svg>
    <span>Filter</span><div class="arr" style="left:213px;top:10px"></div></div>
  <div class="msep" style="top:143px"></div>
  <div class="mi" style="top:150px">
    <svg class="abs" style="left:9px;top:7px" width="14" height="14" viewBox="0 0 14 14"><path d="M0 0 H14 V14 H0 Z M1.600 1.600 V12.400 H4 V1.600 Z M5.500 1.600 V4 H12.400 V1.600 Z M5.500 5.600 V8 H12.400 V5.600 Z M5.500 9.700 V12.400 H12.400 V9.700 Z" fill="#626262" fill-rule="evenodd"/></svg>
    <span>Set Column Position</span><div class="arr" style="left:213px;top:10px"></div></div>
</div>

<!-- filter popup -->
<div class="pop" id="fp" style="left:1111px;top:199px;width:161px;height:298px;z-index:21;overflow:hidden">
  <div class="abs" style="left:8.500px;top:9.800px;font-size:15px;line-height:20px;color:#484848;letter-spacing:-0.500px;white-space:nowrap">Show items with<br>value that:</div>
  <div class="dd" style="left:8px;top:57px;width:130px;height:30px"><span style="top:5.400px">Is equal to</span><div class="dn" style="left:110px;top:12px"></div></div>
  <div class="abs" style="left:8px;top:94px;width:130px;height:30px;border:1px solid #e4e4e4;border-radius:4px;background:#fff"></div>
  <div class="dd" style="left:8px;top:132px;width:72px;height:30px"><span style="top:5px">And</span><div class="dn" style="left:52px;top:12px"></div></div>
  <div class="dd" style="left:8px;top:169.500px;width:130px;height:29.500px;border-color:#dedede;box-shadow:0 0 0 2px rgba(0,0,0,.045)"><span style="top:5.900px">Is equal to</span><div class="dn" style="left:110px;top:12.500px"></div></div>
  <!-- dropdown list -->
  <div class="abs" style="left:9px;top:200px;width:137px;height:83px;background:#fafafa;box-shadow:0 2px 5px rgba(0,0,0,.150)">
    <div class="abs" style="left:0;top:0;width:129px;height:83px;background:#fff;font-size:15px;color:#484848;letter-spacing:-0.500px;overflow:hidden">
      <div class="abs" style="left:8px;top:5px;line-height:28px;white-space:nowrap">Ends with</div>
      <div class="abs" style="left:8px;top:33px;line-height:28px;white-space:nowrap">Is null</div>
      <div class="abs" style="left:0;top:60.800px;width:130px;height:28px;background:#ebebeb"></div>
      <div class="abs" style="left:8px;top:61px;line-height:28px;white-space:nowrap">Is not null</div>
    </div>
    <svg class="abs" style="left:130px;top:5.500px" width="6" height="7" viewBox="0 0 6 7"><path d="M6 0 V7 H0.500Z" fill="#777"/></svg>
  </div>
  <!-- v scrollbar -->
  <div class="abs" style="left:146px;top:0;width:15px;height:283px;background:#fdfdfd">
    <div class="abs" style="left:1.500px;top:6px;width:0;height:0;border-left:5.500px solid transparent;border-right:5.500px solid transparent;border-bottom:7px solid #8b8b8b"></div>
    <div class="abs" style="left:3px;top:18.500px;width:9px;height:173px;border-radius:4.500px;background:#8b8b8b"></div>
    <div class="abs" style="left:1.500px;top:270px;width:0;height:0;border-left:5.500px solid transparent;border-right:5.500px solid transparent;border-top:7px solid #8b8b8b"></div>
  </div>
  <!-- h scrollbar -->
  <div class="abs" style="left:0;top:283px;width:161px;height:15px;background:#fdfdfd">
    <div class="abs" style="left:5px;top:2px;width:0;height:0;border-top:5.500px solid transparent;border-bottom:5.500px solid transparent;border-right:7px solid #8b8b8b"></div>
    <div class="abs" style="left:19px;top:3px;width:104px;height:9px;border-radius:4.500px;background:#8b8b8b"></div>
    <div class="abs" style="left:134px;top:2px;width:0;height:0;border-top:5.500px solid transparent;border-bottom:5.500px solid transparent;border-left:7px solid #8b8b8b"></div>
  </div>
</div>


<div id="red"></div>
<div id="foot"><div>Copyright © 2025 Progress Software Corporation and/or its subsidiaries or affiliates. All Rights Reserved. | <a>Terms of use</a> | <a>Privacy Policy</a></div></div>
</body>
</html>
